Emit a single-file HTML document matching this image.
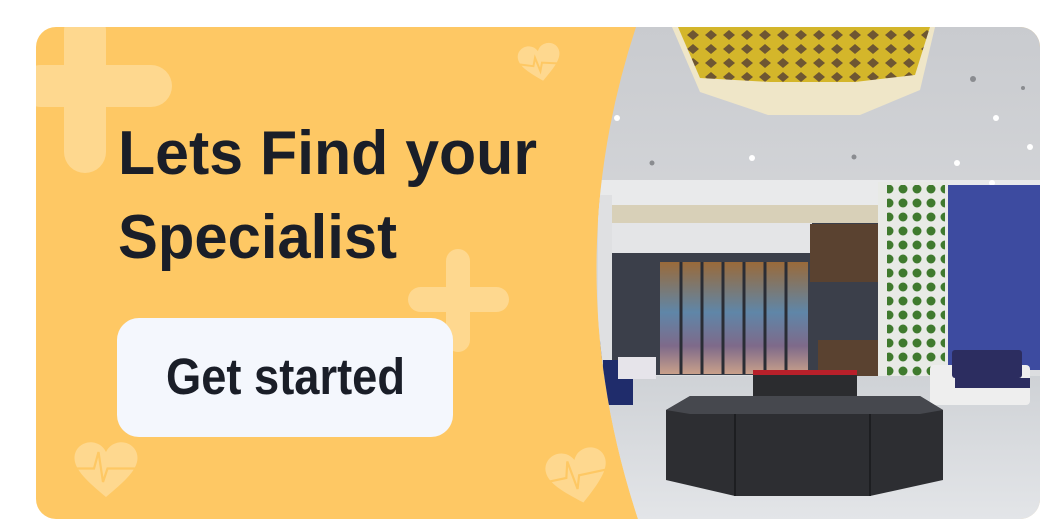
<!DOCTYPE html>
<html><head><meta charset="utf-8"><style>
html,body{margin:0;padding:0;background:#fff;width:1041px;height:519px;overflow:hidden}
svg{display:block}
</style></head><body>
<svg width="1041" height="519" viewBox="0 0 1041 519" xmlns="http://www.w3.org/2000/svg">
<defs>
<clipPath id="card"><rect x="36" y="27" width="1004" height="492" rx="20"/></clipPath>
<clipPath id="photo"><path d="M636,27 Q556,270 638,519 L1041,519 L1041,27 Z"/></clipPath>
<linearGradient id="ceil" x1="0" y1="0" x2="0" y2="1"><stop offset="0" stop-color="#c9cbcf"/><stop offset="1" stop-color="#e4e5e7"/></linearGradient>
<linearGradient id="floor" x1="0" y1="0" x2="0" y2="1"><stop offset="0" stop-color="#cfd2d6"/><stop offset="1" stop-color="#e3e5e8"/></linearGradient>
<linearGradient id="pan" x1="0" y1="0" x2="0" y2="1"><stop offset="0" stop-color="#9a6a3a"/><stop offset="0.45" stop-color="#5f86a8"/><stop offset="0.75" stop-color="#7e6a8a"/><stop offset="1" stop-color="#c9a08a"/></linearGradient>
<pattern id="lat" width="14" height="14" patternUnits="userSpaceOnUse"><rect width="14" height="14" fill="#e8eae6"/><circle cx="7" cy="7" r="4.5" fill="#3f7a2e"/></pattern>
<pattern id="gold" width="18" height="14" patternUnits="userSpaceOnUse"><rect width="18" height="14" fill="#d4b62a"/><polygon points="9,2 15,7 9,12 3,7" fill="#6e5632"/></pattern>
</defs>
<g clip-path="url(#card)">
<rect x="36" y="27" width="1005" height="492" fill="#fec864"/>
<g fill="#fed88f">
<rect x="64" y="10" width="42" height="163" rx="21"/>
<rect x="20" y="65" width="152" height="42" rx="21"/>
<rect x="446" y="249" width="24" height="103" rx="12"/>
<rect x="408" y="287" width="101" height="25" rx="12.5"/>
</g>
<g fill="#fed88f">
<g transform="translate(540,63) rotate(-10)"><path d="M0,18 C-12,8 -21,0 -21,-8 C-21,-16 -13,-20 -7,-18 C-3,-17 -1,-14 0,-12 C1,-14 3,-17 7,-18 C13,-20 21,-16 21,-8 C21,0 12,8 0,18 Z"/><path d="M-20,-2 L-7,2 L-4,-6 L-1,8 L2,0 L20,4" stroke="#fec864" stroke-width="2" fill="none"/></g>
<g transform="translate(106,470) scale(1.5)"><path d="M0,18 C-12,8 -21,0 -21,-8 C-21,-16 -13,-20 -7,-18 C-3,-17 -1,-14 0,-12 C1,-14 3,-17 7,-18 C13,-20 21,-16 21,-8 C21,0 12,8 0,18 Z"/><path d="M-20,-1 L-8,-1 L-5,-12 L-2,8 L1,-1 L20,-1" stroke="#fec864" stroke-width="1.5" fill="none"/></g>
<g transform="translate(578,477) rotate(-12) scale(1.45)"><path d="M0,18 C-12,8 -21,0 -21,-8 C-21,-16 -13,-20 -7,-18 C-3,-17 -1,-14 0,-12 C1,-14 3,-17 7,-18 C13,-20 21,-16 21,-8 C21,0 12,8 0,18 Z"/><path d="M-20,-1 L-8,-1 L-5,-12 L-2,8 L1,-1 L20,-1" stroke="#fec864" stroke-width="1.5" fill="none"/></g>
</g>
<g clip-path="url(#photo)">
<rect x="560" y="27" width="481" height="492" fill="url(#ceil)"/>
<rect x="560" y="180" width="481" height="40" fill="#e9eaeb"/>
<polygon points="672,27 935,27 920,90 860,115 768,115 700,92" fill="#efe6c8"/>
<polygon points="678,27 930,27 915,75 855,82 770,82 700,78" fill="url(#gold)"/>
<g fill="#ffffff"><circle cx="617" cy="118" r="3"/><circle cx="752" cy="158" r="3"/><circle cx="957" cy="163" r="3"/><circle cx="996" cy="118" r="3"/><circle cx="1030" cy="147" r="3"/><circle cx="992" cy="183" r="3"/></g>
<g fill="#8a8c90"><circle cx="652" cy="163" r="2.5"/><circle cx="854" cy="157" r="2.5"/><circle cx="973" cy="79" r="3"/><circle cx="1023" cy="88" r="2"/></g>
<rect x="600" y="215" width="290" height="160" fill="#3b3f4a"/>
<rect x="612" y="205" width="270" height="18" fill="#d8d0b8"/>
<rect x="612" y="223" width="200" height="30" fill="#e4e5e7"/>
<rect x="810" y="224" width="70" height="58" fill="#5a4230"/>
<rect x="660" y="262" width="148" height="112" fill="url(#pan)"/>
<g stroke="#2a2d35" stroke-width="3"><line x1="681" y1="262" x2="681" y2="374"/><line x1="702" y1="262" x2="702" y2="374"/><line x1="723" y1="262" x2="723" y2="374"/><line x1="744" y1="262" x2="744" y2="374"/><line x1="765" y1="262" x2="765" y2="374"/><line x1="786" y1="262" x2="786" y2="374"/></g>
<rect x="818" y="340" width="62" height="40" fill="#5a4230"/>
<rect x="598" y="195" width="14" height="190" fill="#dfe0e2"/>
<rect x="948" y="185" width="93" height="185" fill="#3d4ba0"/>
<rect x="878" y="182" width="70" height="215" fill="#e8eae6"/>
<rect x="887" y="185" width="58" height="205" fill="url(#lat)"/>
<rect x="560" y="376" width="481" height="143" fill="url(#floor)"/>
<rect x="930" y="365" width="100" height="40" rx="4" fill="#eeeeee"/>
<rect x="952" y="350" width="70" height="28" rx="3" fill="#2c2d60"/>
<rect x="955" y="378" width="75" height="10" fill="#2c2d60"/>
<rect x="603" y="360" width="30" height="45" fill="#1f2c6b"/>
<rect x="618" y="357" width="38" height="22" fill="#e6e4ea"/>
<rect x="753" y="372" width="104" height="40" fill="#2b2c2f"/>
<rect x="753" y="370" width="104" height="5" fill="#b8202a"/>
<polygon points="666,410 690,396 920,396 943,410 943,480 870,496 735,496 666,480" fill="#2d2e32"/>
<polygon points="666,410 690,396 920,396 943,410 920,414 690,414" fill="#46484e"/>
<line x1="735" y1="414" x2="735" y2="496" stroke="#1d1e21" stroke-width="2"/>
<line x1="870" y1="414" x2="870" y2="496" stroke="#1d1e21" stroke-width="2"/>
</g>
<text x="118" y="174" font-family="Liberation Sans, sans-serif" font-weight="bold" font-size="62" fill="#1a1e28" textLength="419" lengthAdjust="spacingAndGlyphs">Lets Find your</text>
<text x="118" y="258" font-family="Liberation Sans, sans-serif" font-weight="bold" font-size="62" fill="#1a1e28" textLength="279" lengthAdjust="spacingAndGlyphs">Specialist</text>
<rect x="117" y="318" width="336" height="119" rx="22" fill="#f4f7fd"/>
<text x="166" y="394" font-family="Liberation Sans, sans-serif" font-weight="bold" font-size="51" fill="#1a1e28" textLength="239" lengthAdjust="spacingAndGlyphs">Get started</text>
</g>
</svg>
</body></html>
